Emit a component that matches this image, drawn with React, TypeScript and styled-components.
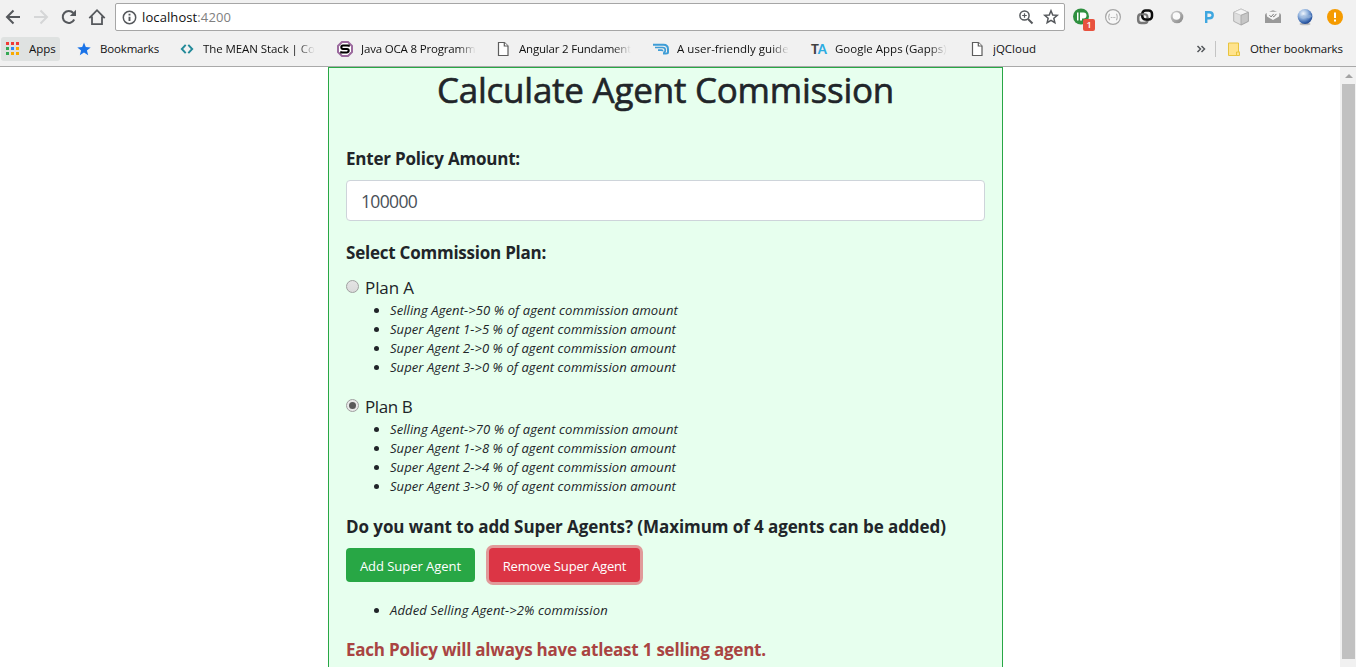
import React, { useState } from 'react';
import styled, { createGlobalStyle, css } from 'styled-components';

const GlobalStyle = createGlobalStyle`
  *, *::before, *::after { box-sizing: border-box; }
  html, body, #root { height: 100%; margin: 0; }
  body {
    overflow: hidden;
    background: #fff;
    color: #212529;
    font-family: "Open Sans", "Noto Sans", sans-serif;
  }
`;

/* ---------- browser frame ---------- */

const Window = styled.div`
  display: flex;
  flex-direction: column;
  height: 667px;
  overflow: hidden;
`;

const Chrome = styled.header`
  flex: none;
  height: 67px;
  background: #f1f1f1;
  border-bottom: 1px solid #a9a9a9;
`;

const Toolbar = styled.div`
  display: flex;
  align-items: center;
  height: 34px;
  padding-left: 3px;
`;

const NavButtons = styled.nav`
  display: flex;
  gap: 8px;
  width: 112px;
`;

const Icon = styled.svg`
  display: block;
  flex: none;
  overflow: visible;
`;

const AddressBar = styled.div`
  display: flex;
  align-items: center;
  width: 950px;
  height: 28px;
  padding: 0 5px 0 6px;
  background: #fff;
  border: 1px solid #a6a6a6;
  border-radius: 2px;
`;

const Url = styled.span`
  flex: 1;
  margin-left: 5px;
  color: #111;
  font-size: 13px;
  letter-spacing: 0.1px;
`;

const Port = styled.span`
  color: #808080;
`;

const AddressActions = styled.div`
  display: flex;
  gap: 9px;
`;

const Extensions = styled.div`
  display: flex;
  gap: 14px;
  margin-left: 7px;
`;

const ExtensionSlot = styled.div<{ $last?: boolean }>`
  position: relative;
  width: ${p => (p.$last ? 16 : 18)}px;
  height: 18px;
  margin-left: ${p => (p.$last ? -1 : 0)}px;
`;

const ExtensionBadge = styled.span`
  position: absolute;
  left: 11px;
  top: 11px;
  width: 12px;
  height: 12px;
  border-radius: 2px;
  background: #e8523f;
  color: #fff;
  font-size: 9px;
  font-weight: 600;
  line-height: 12px;
  text-align: center;
`;

const BookmarkBar = styled.div`
  display: flex;
  align-items: center;
  height: 30px;
  padding-left: 1px;
`;

const AppsButton = styled.div`
  display: flex;
  align-items: center;
  gap: 9px;
  width: 59px;
  height: 24px;
  margin-right: 16px;
  padding-left: 5px;
  border-radius: 3px;
  background: #dfe2e1;
`;

const Bookmark = styled.div<{ $width?: number }>`
  display: flex;
  align-items: center;
  gap: 8px;
  width: ${p => p.$width ?? 158}px;
`;

const BookmarkText = styled.span<{ $fade?: boolean; $spacing?: number }>`
  max-width: 115px;
  overflow: hidden;
  color: #111;
  font-size: 11.5px;
  letter-spacing: ${p => p.$spacing ?? 0}px;
  line-height: 18px;
  white-space: nowrap;
  ${p =>
    p.$fade &&
    css`
      mask-image: linear-gradient(to right, #000 84%, transparent 100%);
    `}
`;

const OtherBookmarks = styled.div`
  display: flex;
  align-items: center;
  gap: 9px;
  height: 16px;
  margin-left: 9px;
  padding-left: 11px;
  border-left: 1px solid #c4c4c4;
`;

const Viewport = styled.div`
  display: flex;
  flex: 1;
  min-height: 0;
`;

const Page = styled.main`
  flex: 1;
  overflow: hidden;
  padding-left: 328px;
`;

const ScrollTrack = styled.aside`
  display: flex;
  flex-direction: column;
  align-items: center;
  width: 16px;
  padding: 7px 0 0 1px;
  background: #f1f1f1;
`;

const ScrollArrow = styled.i`
  width: 0;
  height: 0;
  border: 4px solid transparent;
  border-top: 0;
  border-bottom-color: #a3a3a3;
`;

const ScrollThumb = styled.div`
  width: 13px;
  height: 575px;
  margin-top: 6px;
  background: #c1c1c1;
`;

/* ---------- commission form ---------- */

const Card = styled.section`
  width: 675px;
  height: 700px;
  padding: 0 17px;
  border: 1px solid #28a745;
  background: #e7ffee;
`;

const Title = styled.h1`
  height: 46px;
  margin: 0 0 32px;
  font-size: 35px;
  font-weight: 400;
  letter-spacing: -0.24px;
  line-height: 44px;
  text-align: center;
  -webkit-text-stroke: 0.6px currentColor;
`;

const Label = styled.h2<{ $spacing: number; $error?: boolean }>`
  height: 26px;
  margin: 0;
  color: ${p => (p.$error ? '#a94442' : '#212529')};
  font-size: 17px;
  font-weight: 700;
  letter-spacing: ${p => p.$spacing}px;
  line-height: 26px;
  white-space: nowrap;
`;

const AmountInput = styled.input`
  display: block;
  width: 639px;
  height: 41px;
  margin: 8px 0 19px;
  padding: 1px 14px;
  border: 1px solid #ced4da;
  border-radius: 4px;
  outline: 0;
  background: #fff;
  color: #495057;
  font: 400 17.5px/26px "Open Sans", "Noto Sans", sans-serif;
  letter-spacing: -0.66px;
`;

const PlanBlock = styled.div<{ $first?: boolean }>`
  margin-top: ${p => (p.$first ? 8 : 16)}px;
`;

const PlanOption = styled.label<{ $spacing: number }>`
  display: flex;
  align-items: center;
  gap: 6px;
  height: 27px;
  font-size: 17px;
  letter-spacing: ${p => p.$spacing}px;
  line-height: 27px;
`;

const Radio = styled.input`
  display: grid;
  place-items: center;
  width: 13px;
  height: 13px;
  margin: 0 0 2px;
  appearance: none;
  border: 1px solid #a0a0a0;
  border-radius: 50%;
  background: linear-gradient(#e4e4e4, #dadada);

  &:checked {
    background: #e9e9e9;
  }

  &:checked::before {
    content: '';
    width: 7px;
    height: 7px;
    border-radius: 50%;
    background: #5a5a5a;
  }
`;

const RateList = styled.ul`
  margin: 0;
  padding: 0;
  list-style: none;
`;

const Rate = styled.li<{ $spacing: number }>`
  display: flex;
  align-items: center;
  height: 19px;
  padding-left: 28px;
  font-size: 13px;
  font-style: italic;
  letter-spacing: ${p => p.$spacing}px;
  line-height: 19px;
  white-space: nowrap;

  &::before {
    content: '';
    width: 5px;
    height: 5px;
    margin-right: 11px;
    border-radius: 50%;
    background: #212529;
  }
`;

const AgentQuestion = styled.div`
  margin: 18px 0 8px;
`;

const ButtonRow = styled.div`
  display: flex;
  gap: 14px;
  margin-bottom: 19px;
`;

const Button = styled.button<{ $danger?: boolean }>`
  width: ${p => (p.$danger ? 151 : 129)}px;
  height: 34px;
  padding: 2px 0 0;
  border: 0;
  border-radius: 4px;
  background: ${p => (p.$danger ? '#dc3545' : '#28a745')};
  box-shadow: ${p => (p.$danger ? '0 0 0 3px rgba(220, 53, 69, 0.5)' : 'none')};
  color: #fff;
  font: 400 13px/19px "Open Sans", "Noto Sans", sans-serif;
  letter-spacing: ${p => (p.$danger ? -0.16 : -0.04)}px;
  white-space: nowrap;
`;

const Footer = styled.div`
  margin-top: 17px;
`;

/* ---------- icons ---------- */

const strokeProps = { fill: 'none', stroke: '#55585c', strokeWidth: 2 };

const BackIcon = () => (
  <Icon width="20" height="20" {...strokeProps}>
    <path d="M17 10H4.500M10.500 3.500 4 10l6.500 6.500" />
  </Icon>
);

const ForwardIcon = () => (
  <Icon width="20" height="20" {...strokeProps} stroke="#d5d6d7">
    <path d="M3 10h12.500M9.500 3.500 16 10l-6.500 6.500" />
  </Icon>
);

const ReloadIcon = () => (
  <Icon width="20" height="20" {...strokeProps}>
    <path d="M15.200 12.500A6 6 0 1 1 14.300 6" />
    <path d="M17 2.800V9h-6.200z" fill="#55585c" stroke="none" />
  </Icon>
);

const HomeIcon = () => (
  <Icon width="20" height="20" {...strokeProps} strokeWidth="1.8">
    <path d="M2.300 11.200 10 3.200l7.700 8M5 9.500v7.600h10V9.500" />
  </Icon>
);

const InfoIcon = () => (
  <Icon width="15" height="15" {...strokeProps} strokeWidth="1.500">
    <circle cx="7.500" cy="7.500" r="6.200" />
    <path d="M7.500 6.700v4.300M7.500 3.800v1.700" strokeWidth="1.900" />
  </Icon>
);

const ZoomIcon = () => (
  <Icon width="16" height="16" {...strokeProps} strokeWidth="1.500">
    <circle cx="6.500" cy="6.500" r="4.600" />
    <path d="m10 10 4.500 4.500" strokeWidth="2" />
    <path d="M4.200 6.500h4.600M6.500 4.200v4.600" strokeWidth="1.200" />
  </Icon>
);

const StarIcon = () => (
  <Icon width="16" height="16" {...strokeProps} strokeWidth="1.500">
    <path d="m8 1.800 1.750 4.150 4.500.4-3.400 2.950 1 4.400L8 11.350 4.150 13.700l1-4.400-3.400-2.950 4.500-.4z" />
  </Icon>
);

const ScreencastIcon = () => (
  <Icon width="18" height="18">
    <circle cx="9" cy="8.500" r="8" fill="#2f9040" />
    <path d="M5 4.500h1.500v8H5zM8 4.500h3.500q3 0 3 3t-3 3H10v2H8z" fill="#fff" />
  </Icon>
);

const BracesIcon = () => (
  <Icon width="18" height="18" fill="none" stroke="#a5a5a5" strokeWidth="1.200">
    <circle cx="9" cy="9" r="7.400" fill="#f7f7f7" />
    <path d="M6 6q-1 0-1 1v1.300l-.7.700.7.700V11q0 1 1 1M12 6q1 0 1 1v1.300l.7.700-.7.700V11q0 1-1 1" strokeWidth="1" />
    <path d="M6.800 9.500h1M8.600 9.500h1M10.300 9.500h1" />
  </Icon>
);

const LinkIcon = () => (
  <Icon width="18" height="18" fill="none" strokeWidth="2.500">
    <path d="M11.500 9.500V12q0 3-3 3H5.200q-3 0-3-3V9.300q0-3 3-3" stroke="#777" />
    <rect x="6.300" y="2.500" width="9.700" height="9" rx="3.300" stroke="#0c0c0c" />
    <path d="M5.200 6.300h3.300q3 0 3 3v1" stroke="#777" strokeWidth="2" />
  </Icon>
);

const LensIcon = () => (
  <Icon width="18" height="18">
    <defs>
      <linearGradient id="lens" x2="1" y2="1">
        <stop stopColor="#d0d0d0" />
        <stop offset="1" stopColor="#858585" />
      </linearGradient>
    </defs>
    <circle cx="9" cy="9" r="6.300" fill="url(#lens)" />
    <circle cx="8.500" cy="8" r="3.800" fill="#fafafa" />
  </Icon>
);

const PIcon = () => (
  <Icon width="18" height="18" fill="none" stroke="#3fa7e0" strokeWidth="2.400">
    <path d="M6.200 15V4.200h3q3.500 0 3.500 3t-3.500 3h-3" />
  </Icon>
);

const CubeIcon = () => (
  <Icon width="18" height="18" stroke="#a2a2a2" strokeWidth=".8">
    <path d="m9 1 7.300 3.300v9L9 17l-7.300-3.700v-9z" fill="#dedede" />
    <path d="M1.700 4.300 9 7.300l7.300-3L9 1z" fill="#f4f4f4" stroke="#c4c4c4" />
    <path d="M9 7.300V17l7.300-3.700v-9z" fill="#c6c6c6" />
  </Icon>
);

const MailIcon = () => (
  <Icon width="18" height="18">
    <path d="m1 6 8-4 8 4v9H1z" fill="#b1b1b1" />
    <path d="m1 6.500 8 5 8-5V15H1z" fill="#999" />
    <path d="M3 4h12v4.500l-6 3.500-6-3.500z" fill="#f4f4f4" />
    <path d="m5.500 7.200 1.600 1.700 2.600-3M9 8.300l.8.600 2.600-3" fill="none" stroke="#777" />
  </Icon>
);

const GlobeIcon = () => (
  <Icon width="18" height="18">
    <defs>
      <radialGradient id="globe" cx=".38" cy=".3" r=".75">
        <stop stopColor="#eff5fc" />
        <stop offset=".42" stopColor="#96b6df" />
        <stop offset=".8" stopColor="#3765ae" />
        <stop offset="1" stopColor="#1b3d83" />
      </radialGradient>
    </defs>
    <ellipse cx="9" cy="16" rx="5.500" ry="1.300" fill="#bdbdbd" />
    <circle cx="9" cy="8.500" r="7.400" fill="url(#globe)" />
    <path d="M2.500 7.500q3 1.500 5-.5l3 1 4-1.500 1.500 2-3 2-3-1-3 1.500z" fill="#9ebadd" opacity=".55" />
  </Icon>
);

const AlertIcon = () => (
  <Icon width="16" height="18">
    <circle cx="8" cy="9" r="8" fill="#f59b00" />
    <path d="M7 4.500h2V10H7zM7 11.500h2v2H7z" fill="#fff" />
  </Icon>
);

const gridColors = ['#f13a35', '#f13a35', '#f13a35', '#34a853', '#2f86f6', '#f9ab00', '#34a853', '#f9ab00', '#f9ab00'];

const AppsIcon = () => (
  <Icon width="14" height="14">
    {gridColors.map((color, i) => (
      <rect key={i} x={(i % 3) * 5} y={Math.floor(i / 3) * 5} width="3" height="3" fill={color} />
    ))}
  </Icon>
);

const BlueStarIcon = () => (
  <Icon width="16" height="16">
    <path d="m8 1.500 1.800 4.600 4.900.3-3.800 3.100 1.300 4.800L8 11.600l-4.200 2.700 1.300-4.800-3.800-3.100 4.900-.3z" fill="#1a73e8" />
  </Icon>
);

const CodeIcon = () => (
  <Icon width="16" height="16" fill="none" stroke="#238a99" strokeWidth="1.900">
    <path d="M6.700 3.800 2.800 8l3.900 4.200M9.300 3.800 13.200 8l-3.900 4.200" />
  </Icon>
);

const SIcon = () => (
  <Icon width="16" height="16" fill="none">
    <path d="M5 1h6l4 4v6l-4 4H5l-4-4V5z" fill="#fff" stroke="#9b6a9e" strokeWidth="2" />
    <path d="M11.800 5.800V4.600H6Q4.300 4.600 4.300 6.200T6 7.900h4q1.700 0 1.700 1.700T10 11.400H4.200v-1.200" stroke="#000" strokeWidth="2" />
  </Icon>
);

const FileIcon = () => (
  <Icon width="16" height="16" fill="#fff" stroke="#5d5d5d" strokeWidth="1.200">
    <path d="M3.500 1.500h6l3.500 3.500v9.500H3.500z" />
    <path d="M9.300 1.500V5H13" />
  </Icon>
);

const WingIcon = () => (
  <Icon width="16" height="16" fill="none" stroke="#3f9dd6" strokeWidth="2">
    <path d="M0 3.800h10.500q4.500 0 4.500 4.500v3q0 1.200-2 1.200h-3" />
    <path d="M2 6.500h7.500q2.800 0 2.800 2.500t-2 2.500M5 9.100h3.500q1.200 0 1.200 1.200" strokeWidth="1.700" />
  </Icon>
);

const TaMark = styled.span`
  width: 16px;
  color: #414141;
  font: 900 13px/16px Lato, sans-serif;
  letter-spacing: -0.3px;
  white-space: nowrap;
`;

const TaAccent = styled.span`
  color: #2bace2;
`;

const ChevronsIcon = () => (
  <Icon width="10" height="10" fill="none" stroke="#55585c" strokeWidth="1.500">
    <path d="m1.500 2 3 3-3 3M5.500 2l3 3-3 3" />
  </Icon>
);

const FolderIcon = () => (
  <Icon width="14" height="15" fill="#ffe38d" stroke="#e8c43f">
    <path d="M1.500 1h10v9h1v3.500h-11z" />
    <path d="M9.500 13.500V10h3" />
  </Icon>
);

/* ---------- data ---------- */

const bookmarks = [
  { text: 'The MEAN Stack | Co', icon: <CodeIcon />, spacing: -0.08, fade: true },
  { text: 'Java OCA 8 Programm', icon: <SIcon />, spacing: -0.17, fade: true },
  { text: 'Angular 2 Fundament', icon: <FileIcon />, spacing: -0.2, fade: true },
  { text: 'A user-friendly guide', icon: <WingIcon />, spacing: 0.03, fade: true },
  { text: 'Google Apps (Gapps)', icon: <TaMark>T<TaAccent>A</TaAccent></TaMark>, spacing: 0, fade: true },
  { text: 'jQCloud', icon: <FileIcon />, spacing: 0, fade: false },
];

const plans = [
  {
    name: 'Plan A',
    spacing: -0.09,
    rates: [
      { agent: 'Selling Agent', percent: 50 },
      { agent: 'Super Agent 1', percent: 5 },
      { agent: 'Super Agent 2', percent: 0 },
      { agent: 'Super Agent 3', percent: 0 },
    ],
  },
  {
    name: 'Plan B',
    spacing: -0.4,
    rates: [
      { agent: 'Selling Agent', percent: 70 },
      { agent: 'Super Agent 1', percent: 8 },
      { agent: 'Super Agent 2', percent: 4 },
      { agent: 'Super Agent 3', percent: 0 },
    ],
  },
];

function BrowserChrome() {
  return (
    <Chrome>
      <Toolbar>
        <NavButtons>
          <BackIcon />
          <ForwardIcon />
          <ReloadIcon />
          <HomeIcon />
        </NavButtons>
        <AddressBar>
          <InfoIcon />
          <Url>
            localhost<Port>:4200</Port>
          </Url>
          <AddressActions>
            <ZoomIcon />
            <StarIcon />
          </AddressActions>
        </AddressBar>
        <Extensions>
          <ExtensionSlot>
            <ScreencastIcon />
            <ExtensionBadge>1</ExtensionBadge>
          </ExtensionSlot>
          <ExtensionSlot><BracesIcon /></ExtensionSlot>
          <ExtensionSlot><LinkIcon /></ExtensionSlot>
          <ExtensionSlot><LensIcon /></ExtensionSlot>
          <ExtensionSlot><PIcon /></ExtensionSlot>
          <ExtensionSlot><CubeIcon /></ExtensionSlot>
          <ExtensionSlot><MailIcon /></ExtensionSlot>
          <ExtensionSlot><GlobeIcon /></ExtensionSlot>
          <ExtensionSlot $last><AlertIcon /></ExtensionSlot>
        </Extensions>
      </Toolbar>
      <BookmarkBar>
        <AppsButton>
          <AppsIcon />
          <BookmarkText>Apps</BookmarkText>
        </AppsButton>
        <Bookmark $width={103}>
          <BlueStarIcon />
          <BookmarkText $spacing={-0.17}>Bookmarks</BookmarkText>
        </Bookmark>
        {bookmarks.map((b, i) => (
          <Bookmark key={b.text} $width={i === bookmarks.length - 1 ? 227 : 158}>
            {b.icon}
            <BookmarkText $spacing={b.spacing} $fade={b.fade}>{b.text}</BookmarkText>
          </Bookmark>
        ))}
        <ChevronsIcon />
        <OtherBookmarks>
          <FolderIcon />
          <BookmarkText $spacing={-0.1}>Other bookmarks</BookmarkText>
        </OtherBookmarks>
      </BookmarkBar>
    </Chrome>
  );
}

function CommissionForm() {
  const [amount, setAmount] = useState('100000');
  const [selected, setSelected] = useState('Plan B');

  return (
    <Card>
      <Title>Calculate Agent Commission</Title>
      <Label $spacing={-0.21}>Enter Policy Amount:</Label>
      <AmountInput value={amount} onChange={e => setAmount(e.target.value)} />
      <Label $spacing={-0.23}>Select Commission Plan:</Label>
      {plans.map((plan, i) => (
        <PlanBlock key={plan.name} $first={i === 0}>
          <PlanOption $spacing={plan.spacing}>
            <Radio
              type="radio"
              name="plan"
              checked={selected === plan.name}
              onChange={() => setSelected(plan.name)}
            />
            {plan.name}
          </PlanOption>
          <RateList>
            {plan.rates.map((rate, n) => (
              <Rate key={rate.agent} $spacing={n === 0 ? 0.1 : 0.07}>
                {`${rate.agent}->${rate.percent} % of agent commission amount`}
              </Rate>
            ))}
          </RateList>
        </PlanBlock>
      ))}
      <AgentQuestion>
        <Label $spacing={-0.08}>Do you want to add Super Agents? (Maximum of 4 agents can be added)</Label>
      </AgentQuestion>
      <ButtonRow>
        <Button>Add Super Agent</Button>
        <Button $danger>Remove Super Agent</Button>
      </ButtonRow>
      <RateList>
        <Rate $spacing={0.135}>{'Added Selling Agent->2% commission'}</Rate>
      </RateList>
      <Footer>
        <Label $spacing={-0.22} $error>Each Policy will always have atleast 1 selling agent.</Label>
      </Footer>
    </Card>
  );
}

export default function App() {
  return (
    <Window>
      <GlobalStyle />
      <BrowserChrome />
      <Viewport>
        <Page>
          <CommissionForm />
        </Page>
        <ScrollTrack>
          <ScrollArrow />
          <ScrollThumb />
        </ScrollTrack>
      </Viewport>
    </Window>
  );
}
